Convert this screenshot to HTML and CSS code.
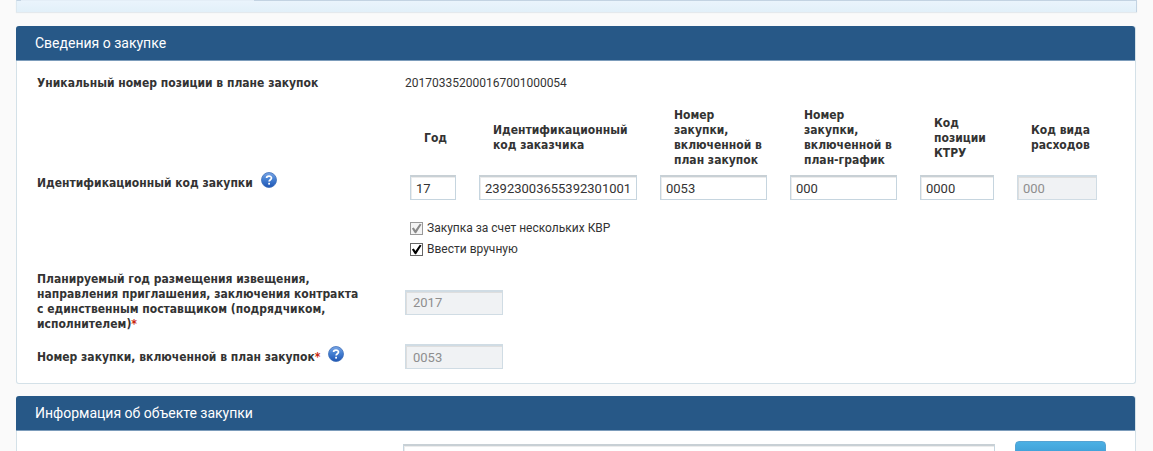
FILE: index.html
```html
<!DOCTYPE html>
<html lang="ru">
<head>
<meta charset="utf-8">
<title>Сведения о закупке</title>
<link rel="stylesheet" href="styles.css">
</head>
<body>
<svg class="defs" width="0" height="0" aria-hidden="true">
  <defs>
    <linearGradient id="ball" x1="0" y1="0" x2="0" y2="1">
      <stop offset="0" stop-color="#7ba6e6"/>
      <stop offset="0.45" stop-color="#4580d2"/>
      <stop offset="1" stop-color="#1f55b4"/>
    </linearGradient>
    <symbol id="help" viewBox="0 0 16 16">
      <circle cx="8" cy="8" r="7.5" fill="url(#ball)" stroke="#3f6fb8" stroke-width="0.8"/>
      <path d="M5.6 6.1C5.6 3.6 10.5 3.5 10.5 6.1C10.5 7.7 8.1 7.8 8.1 9.6" fill="none" stroke="#fff" stroke-width="1.7"/>
      <rect x="7.2" y="10.8" width="1.8" height="1.8" fill="#fff"/>
    </symbol>
  </defs>
</svg>
<div class="tabs"><div class="tab-active"></div></div>
<main class="page">
  <section class="panel">
    <h2 class="panel-title">Сведения о закупке</h2>
    <div class="panel-body">
      <div class="row">
        <div class="label">Уникальный номер позиции в плане закупок</div>
        <div class="value">201703352000167001000054</div>
      </div>
      <div class="row row-code">
        <div class="label">Идентификационный код закупки
          <button class="help" type="button" aria-label="Справка"><svg width="16" height="16"><use href="#help"/></svg></button>
        </div>
        <div class="value">
          <table class="codes">
            <colgroup><col class="c-year"><col class="c-customer"><col class="c-number"><col class="c-number"><col class="c-ktru"><col class="c-kvr"></colgroup>
            <thead>
              <tr>
                <th id="h1">Год</th>
                <th id="h2">Идентификационный<br>код заказчика</th>
                <th id="h3">Номер<br>закупки,<br>включенной в<br>план закупок</th>
                <th id="h4">Номер<br>закупки,<br>включенной в<br>план-график</th>
                <th id="h5">Код<br>позиции<br>КТРУ</th>
                <th id="h6">Код вида<br>расходов</th>
              </tr>
            </thead>
            <tbody>
              <tr>
                <td><input class="field" type="text" value="17" aria-labelledby="h1"></td>
                <td><input class="field" type="text" value="23923003655392301001" aria-labelledby="h2"></td>
                <td><input class="field" type="text" value="0053" aria-labelledby="h3"></td>
                <td><input class="field" type="text" value="000" aria-labelledby="h4"></td>
                <td><input class="field" type="text" value="0000" aria-labelledby="h5"></td>
                <td><input class="field" type="text" value="000" aria-labelledby="h6" disabled></td>
              </tr>
            </tbody>
          </table>
          <div class="checks">
            <label class="check"><input type="checkbox" checked disabled>Закупка за счет нескольких КВР</label>
            <label class="check"><input type="checkbox" checked>Ввести вручную</label>
          </div>
        </div>
      </div>
      <div class="row row-year">
        <label class="label" for="year">Планируемый год размещения извещения,<br>направления приглашения, заключения контракта<br>с единственным поставщиком (подрядчиком,<br>исполнителем)<span class="req">*</span></label>
        <div class="value"><input class="field field-short" id="year" type="text" value="2017" disabled></div>
      </div>
      <div class="row">
        <div class="label"><label for="num">Номер закупки, включенной в план закупок<span class="req">*</span></label>
          <button class="help" type="button" aria-label="Справка"><svg width="16" height="16"><use href="#help"/></svg></button>
        </div>
        <div class="value"><input class="field field-short" id="num" type="text" value="0053" disabled></div>
      </div>
    </div>
  </section>
  <section class="panel">
    <h2 class="panel-title">Информация об объекте закупки</h2>
    <div class="object-row">
      <textarea class="field object-text" aria-label="Объект закупки"></textarea>
      <button class="action" type="button" aria-label="Выбрать"></button>
    </div>
  </section>
</main>
</body>
</html>
```
FILE: styles.css
```css
* {
  box-sizing: border-box;
}

html {
  height: 100%;
  overflow: hidden;
}

body {
  margin: 0;
  height: 100%;
  overflow: hidden;
  background: #fafafa;
  color: #333;
  font: 12px/15px Roboto, "Noto Sans", sans-serif;
}

.defs {
  display: block;
}

.tabs {
  height: 12px;
  margin: 0 16px;
  border: solid #c3d3e2;
  border-width: 1px 1px 0;
  border-left-color: #dce8f0;
  background: linear-gradient(#eaf4fc, #e2f0f9);
  box-shadow: 0 1px 1px #e4e9ed;
}

.tab-active {
  width: 233px;
  height: 1px;
  margin: -1px 0 0 4px;
  background: #e4eef7;
}

.page {
  display: flex;
  flex-direction: column;
  gap: 12px;
  padding: 14px 17px 0 16px;
}

.panel {
  border: 1px solid #d4e1e8;
  border-top: 0;
  border-radius: 3px;
  background: #fff;
}

.panel-title {
  margin: 0 0 0 -1px;
  padding: 8px 19px;
  border-bottom: 1px solid #7c9cbb;
  border-radius: 3px 3px 0 0;
  background: #275887;
  color: #fff;
  font-weight: normal;
  font-size: 14px;
  line-height: 18px;
}

.panel-body {
  display: flex;
  flex-direction: column;
  gap: 12px;
  padding: 15px 20px 14px;
}

.row {
  display: flex;
  align-items: center;
}

.row-code .label {
  padding-top: 6px;
}

.row-year {
  margin-top: 3px;
}

.label {
  flex: 0 0 368px;
}

.label,
.codes th {
  font-weight: bold;
  font-family: "DejaVu Sans Condensed", "DejaVu Sans", sans-serif;
}

.value {
  flex: 1;
}

.req {
  color: #c9260c;
}

.help {
  margin: 0 0 6px 4px;
  padding: 0;
  border: 0;
  background: none;
  vertical-align: middle;
}

.help svg {
  display: block;
}

.codes {
  margin-left: 5px;
  border-collapse: collapse;
  table-layout: fixed;
  width: 710px;
}

.c-year { width: 69px; }
.c-customer { width: 181px; }
.c-number { width: 130px; }
.c-ktru { width: 97px; }
.c-kvr { width: 103px; }

.codes th {
  padding: 5px 0 7px 14px;
  text-align: left;
  vertical-align: middle;
  white-space: nowrap;
}

.codes td {
  padding: 0 23px 0 0;
}

.field {
  display: block;
  width: 100%;
  height: 25px;
  margin: 0;
  padding: 0 5px;
  border: 1px solid #c6d5df;
  border-top: 2px solid #c8d0d5;
  border-radius: 0;
  background: #fff;
  box-shadow: inset 1px 1px 0 #ececec;
  color: #333;
  font: 13px/18px Roboto, "Noto Sans", sans-serif;
}

.field:disabled {
  border-color: #d0dce4;
  background: #f0f2f4;
  box-shadow: inset 1px 1px 0 #dedede;
  color: #8e8e8e;
}

.field-short {
  width: 98px;
  padding: 0 7px;
}

.checks {
  display: flex;
  flex-direction: column;
  gap: 6px;
  margin: 21px 0 0 5px;
}

.check {
  display: flex;
  align-items: center;
  gap: 4px;
}

.check input {
  appearance: none;
  width: 13px;
  height: 13px;
  margin: 0;
  border: 1px solid #666;
  background: #fff;
}

.check input::before {
  content: "";
  display: block;
  width: 11px;
  height: 11px;
  background: #000;
  clip-path: polygon(8% 50%, 26% 42%, 40% 64%, 80% 6%, 96% 14%, 46% 94%, 36% 94%);
}

.check input:disabled {
  border-color: #999;
  background: #f4f4f4;
}

.check input:disabled::before {
  background: #8a8a8a;
}

.object-row {
  display: flex;
  gap: 20px;
  padding: 13px 29px 0 386px;
}

.object-text {
  flex: 1;
  height: 60px;
  resize: none;
}

.action {
  width: 91px;
  height: 30px;
  margin-top: -3px;
  border: 1px solid #55a3d3;
  border-radius: 4px;
  background: linear-gradient(#4bb0e4, #2f86c4);
}
```
